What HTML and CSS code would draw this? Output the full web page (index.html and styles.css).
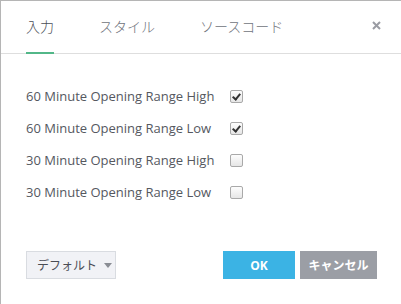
FILE: index.html
```html
<!DOCTYPE html>
<html lang="ja">
<head>
    <meta charset="UTF-8">
    <title>Settings</title>
    <link rel="stylesheet" href="styles.css">
</head>
<body>
<div class="dialog">
    <div class="tabs">
        <div class="tab active">入力</div>
        <div class="tab">スタイル</div>
        <div class="tab">ソースコード</div>
        <div class="close">
            <svg width="9" height="9" viewBox="0 0 9 9"><path d="M1 1L8 8M8 1L1 8" stroke="#9a9ca3" stroke-width="2"/></svg>
        </div>
    </div>
    <div class="content">
        <label class="row"><span class="name">60 Minute Opening Range High</span><span class="check on"></span></label>
        <label class="row"><span class="name">60 Minute Opening Range Low</span><span class="check on"></span></label>
        <label class="row"><span class="name">30 Minute Opening Range High</span><span class="check"></span></label>
        <label class="row"><span class="name">30 Minute Opening Range Low</span><span class="check"></span></label>
    </div>
    <div class="footer">
        <button class="defaults">デフォルト<span class="caret"></span></button>
        <div class="spacer"></div>
        <button class="ok">OK</button>
        <button class="cancel">キャンセル</button>
    </div>
</div>
</body>
</html>
```
FILE: styles.css
```css
body {
    margin: 0;
    font-family: "Open Sans", "Noto Sans CJK JP", sans-serif;
    background: #fff;
}
.dialog {
    width: 400px;
    height: 303px;
    border-top: 1px solid #b5b5b5;
    border-left: 1px solid #b5b5b5;
    display: flex;
    flex-direction: column;
}
.tabs {
    display: flex;
    align-items: flex-end;
    height: 52px;
    border-bottom: 1px solid #dedede;
    padding-left: 25px;
    position: relative;
}
.tab {
    font-size: 14px;
    font-weight: 300;
    color: #6f737b;
    padding-bottom: 16px;
    margin-right: 45px;
    border-bottom: 2px solid transparent;
    margin-bottom: -1px;
}
.tab.active {
    color: #4a4d55;
    border-bottom-color: #52b788;
}
.close {
    position: absolute;
    right: 20px;
    top: 20px;
}
.close svg {
    display: block;
}
.content {
    padding: 26px 25px 0;
    flex: 1;
}
.row {
    display: flex;
    align-items: center;
    height: 32px;
    font-size: 13px;
    color: #55585f;
}
.name {
    width: 204px;
}
.check {
    width: 11px;
    height: 11px;
    border: 1px solid #a9a9a9;
    border-radius: 2px;
    background: linear-gradient(#fdfdfd, #e6e6e6);
    position: relative;
}
.check.on::after {
    content: "";
    position: absolute;
    left: 3px;
    top: 1px;
    width: 3px;
    height: 6px;
    border: solid #333;
    border-width: 0 2px 2px 0;
    transform: rotate(40deg);
}
.footer {
    display: flex;
    padding: 0 24px 25px 25px;
    gap: 5px;
}
.spacer {
    flex: 1;
}
button {
    font-family: inherit;
    height: 28px;
    border: none;
    font-size: 12px;
    font-weight: bold;
    color: #fff;
    padding: 0;
}
.defaults {
    width: 90px;
    background: #f1f2f6;
    border: 1px solid #d9dce1;
    color: #4a4d55;
    font-weight: normal;
    display: flex;
    align-items: center;
    padding-left: 10px;
}
.caret {
    border: 4px solid transparent;
    border-top: 5px solid #8a8d94;
    border-bottom: none;
    margin-left: 7px;
}
.ok {
    width: 72px;
    background: #3bb3e4;
}
.cancel {
    width: 77px;
    background: #9b9ea5;
}
```
